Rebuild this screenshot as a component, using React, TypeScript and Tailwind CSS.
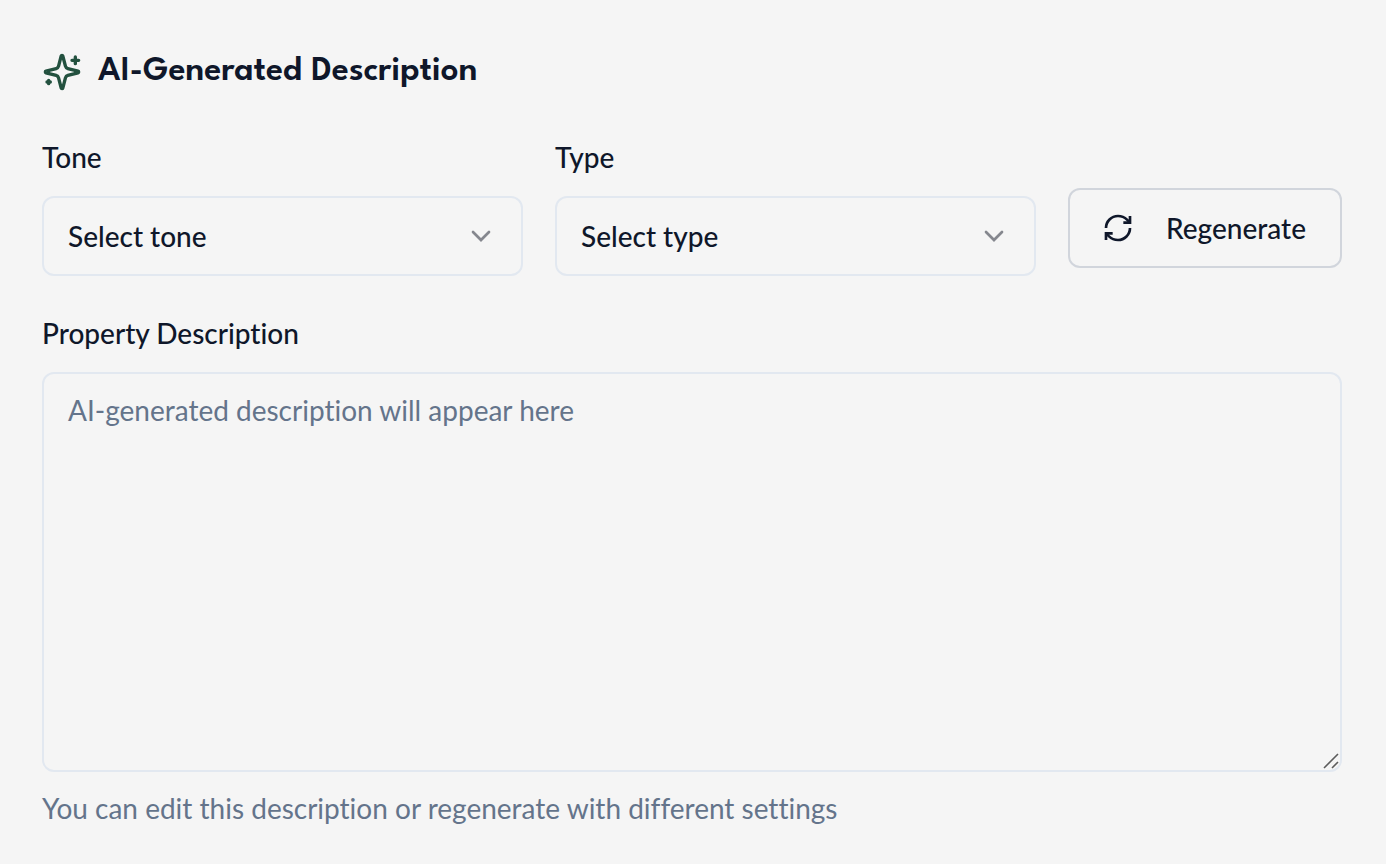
import { ChevronDown, RefreshCw } from "lucide-react";

type PickerProps = { id: string; label: string; placeholder: string; options: string[] };

function SparklesIcon() {
  return (
    <svg
      viewBox="0 0 24 24"
      className="size-10 text-[#23513f]"
      fill="none"
      stroke="currentColor"
      strokeWidth={2}
      strokeLinecap="round"
      strokeLinejoin="round"
      aria-hidden="true"
    >
      <path d="M9.937 15.5A2 2 0 0 0 8.5 14.063l-6.135-1.582a.5.5 0 0 1 0-.962L8.5 9.936A2 2 0 0 0 9.937 8.5l1.582-6.135a.5.5 0 0 1 .963 0L14.063 8.5A2 2 0 0 0 15.5 9.937l6.135 1.581a.5.5 0 0 1 0 .964L15.5 14.063a2 2 0 0 0-1.437 1.437l-1.582 6.135a.5.5 0 0 1-.963 0z" />
      <path d="M20 3v4M22 5h-4M4 17v2M5 18H3" />
    </svg>
  );
}

function Picker({ id, label, placeholder, options }: PickerProps) {
  return (
    <div className="flex min-w-0 flex-1 flex-col gap-[19px]">
      <label htmlFor={id} className="text-[28px] leading-10 font-medium">
        {label}
      </label>
      <div className="grid items-center">
        <select
          id={id}
          defaultValue=""
          className="col-start-1 row-start-1 h-20 w-full appearance-none rounded-xl border-2 border-slate-200 bg-transparent px-6 text-[28px] leading-10 font-medium"
        >
          <option value="">{placeholder}</option>
          {options.map((o) => (
            <option key={o}>{o}</option>
          ))}
        </select>
        <ChevronDown
          className="pointer-events-none col-start-1 row-start-1 mr-[26px] size-8 justify-self-end text-[#85878e]"
          strokeLinejoin="miter"
        />
      </div>
    </div>
  );
}

export default function App() {
  return (
    <main className="min-h-screen bg-[#f5f5f5] pt-[42px] pr-11 pb-8 pl-[42px] font-[Lato,sans-serif] text-[#0f172a] [font-variant-ligatures:none]">
      <header className="flex items-center gap-4">
        <SparklesIcon />
        <h1 className="font-['League_Spartan',Lato,sans-serif] text-[35px] leading-[60px] font-semibold">
          AI-Generated Description
        </h1>
      </header>
      <form className="mt-[35px]" onSubmit={(e) => e.preventDefault()}>
        <div className="flex items-end gap-8">
          <Picker id="tone" label="Tone" placeholder="Select tone" options={["Professional", "Friendly", "Luxury"]} />
          <Picker id="type" label="Type" placeholder="Select type" options={["Short", "Standard", "Detailed"]} />
          <button
            type="button"
            className="mb-2 flex h-20 min-w-[274px] items-center gap-8 rounded-xl border-2 border-gray-300 px-8 text-[28px] leading-10 font-medium"
          >
            <RefreshCw className="size-8" strokeLinecap="butt" strokeLinejoin="miter" />
            Regenerate
          </button>
        </div>
        <div className="mt-[37px] flex flex-col gap-[19px]">
          <label htmlFor="description" className="text-[28px] leading-10 font-medium">
            Property Description
          </label>
          <div className="grid">
            <textarea
              id="description"
              placeholder="AI-generated description will appear here"
              className="col-start-1 row-start-1 h-[400px] w-full resize-y rounded-xl border-2 border-slate-200 px-6 py-4 text-[28px] leading-10 placeholder:text-[#64748b] [&::-webkit-resizer]:bg-transparent"
            />
            <svg
              viewBox="0 0 18 18"
              className="pointer-events-none col-start-1 row-start-1 mr-0.5 mb-0.5 size-[18px] self-end justify-self-end text-[#5c5c5c]"
              fill="none"
              stroke="currentColor"
              strokeWidth={1.6}
              aria-hidden="true"
            >
              <path d="M2 16L16 2M10 16L16 10" />
            </svg>
          </div>
        </div>
        <p className="mt-4 text-[28px] leading-10 text-[#64748b]">
          You can edit this description or regenerate with different settings
        </p>
      </form>
    </main>
  );
}
